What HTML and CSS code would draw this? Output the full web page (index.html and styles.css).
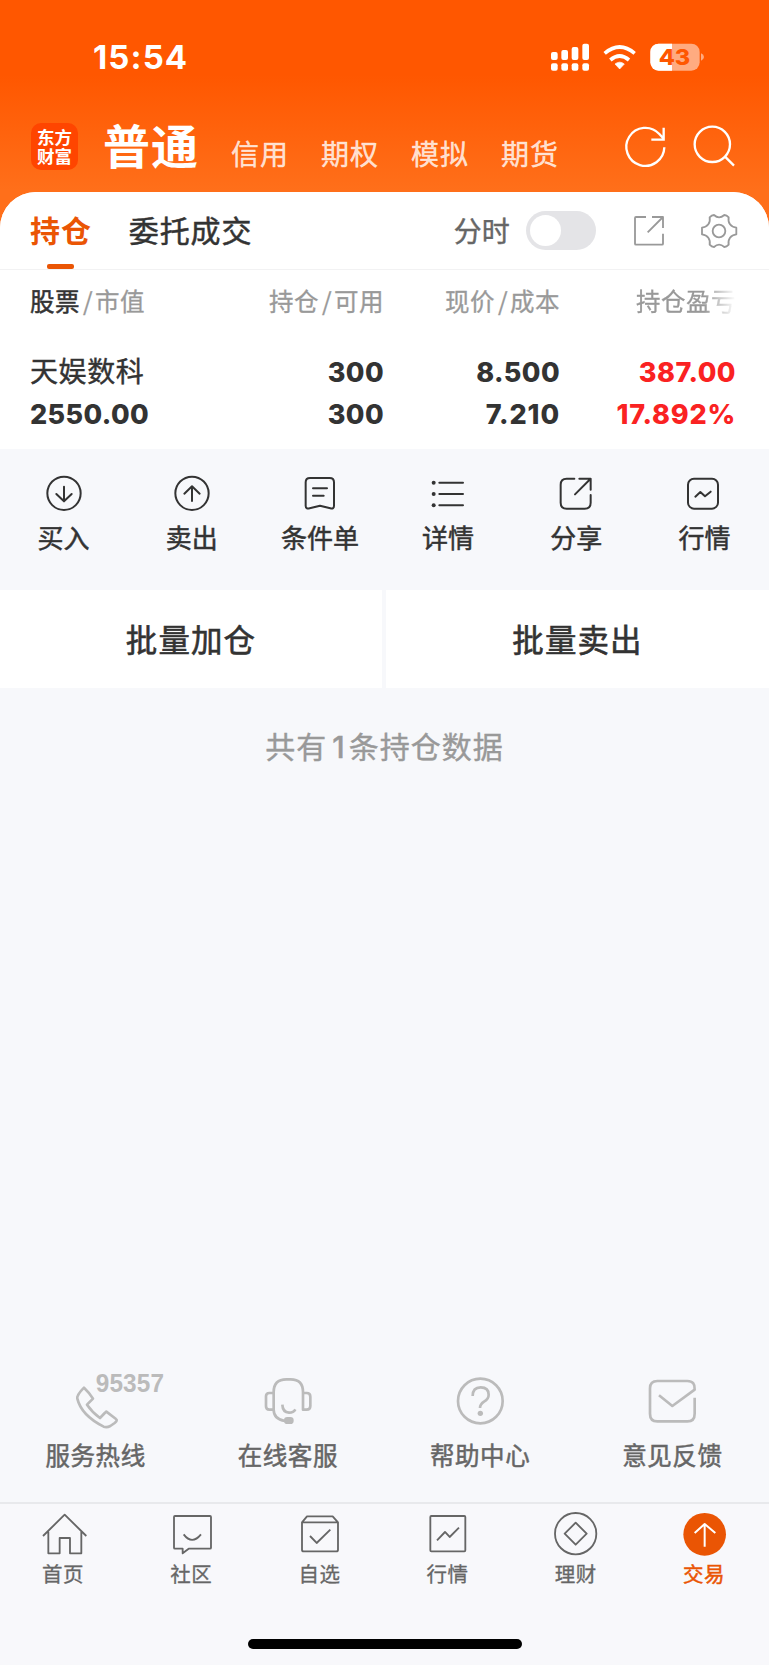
FILE: index.html
```html
<!DOCTYPE html>
<html lang="zh-CN">
<head>
<meta charset="utf-8">
<title>持仓</title>
<link rel="stylesheet" href="styles.css">
</head>
<body>
<div class="app">
  <header class="header">
    <div class="status">
      <span class="clock">15:54</span>
      <svg class="status-icons" viewBox="480 120 490 100">
        <g fill="#fff">
          <rect x="498" y="156" width="20" height="24" rx="6"/><rect x="529" y="150" width="20" height="30" rx="6"/>
          <rect x="560" y="141" width="20" height="39" rx="6"/><rect x="592" y="131" width="20" height="49" rx="6"/>
          <rect x="498" y="190" width="20" height="22" rx="6"/><rect x="529" y="190" width="20" height="22" rx="6"/>
          <rect x="560" y="190" width="20" height="22" rx="6"/><rect x="592" y="190" width="20" height="22" rx="6"/>
          <path d="M690 192q14-11 28 0l-14 15z" stroke="#fff" stroke-width="2" stroke-linejoin="round"/>
        </g>
        <g fill="none" stroke="#fff" stroke-width="11"><path d="M659 160q45-38 90 0"/><path d="M676 180q28-24 56 0"/></g>
        <rect x="796" y="131" width="148" height="81" rx="25" fill="#ffab80"/>
        <path d="M861 131h-40a25 25 0 0 0-25 25v31a25 25 0 0 0 25 25h40z" fill="#fff"/>
        <path d="M948 160q9 4 9 11t-9 11z" fill="#ffab80"/>
        <text class="battery-text" x="821" y="195" textLength="95" lengthAdjust="spacingAndGlyphs">43</text>
      </svg>
    </div>
    <nav class="accounts">
      <div class="logo">东方<br>财富</div>
      <strong class="account-current">普通</strong>
      <div class="account-list"><span>信用</span><span>期权</span><span>模拟</span><span>期货</span></div>
      <svg class="header-icons" viewBox="710 366 350 150" fill="none" stroke="#fff" stroke-width="7">
        <path d="M837 442a57 57 0 1 1-15-40l11 12M835 383v36h-37"/>
        <circle cx="981" cy="433" r="53"/><path d="M1019 470l27 27"/>
      </svg>
    </nav>
  </header>
  <main class="sheet">
    <div class="tabs">
      <span class="tab tab-active">持仓</span>
      <span class="tab">委托成交</span>
      <span class="minute">分时</span>
      <span class="switch"></span>
      <svg class="tool-icons" viewBox="740 636 325 114" fill="none" stroke="#999" stroke-width="5.5" stroke-linejoin="round">
        <path d="M782 651h-30q-3 0-3 3v77q0 3 3 3h78q3 0 3-3v-30M800 651h33v33M833 651l-46 46"/>
        <circle cx="1001" cy="693" r="19"/>
        <path d="M986 645Q1001 659 1017 645Q1024 645 1030 652C1027 668 1036 681 1053 683V703C1036 705 1027 718 1030 734Q1024 741 1017 741Q1001 727 986 741Q979 741 973 734C976 718 967 705 950 703V683C967 681 976 668 973 652Q979 645 986 645Z"/>
      </svg>
    </div>
    <section class="holdings">
      <div class="row row-head">
        <span><b>股票</b><i>/</i>市值</span><span>持仓<i>/</i>可用</span><span>现价<i>/</i>成本</span><span class="fade">持仓盈亏</span>
      </div>
      <div class="row row-name"><span class="name">天娱数科</span><span>300</span><span>8.500</span><span class="gain">387.00</span></div>
      <div class="row row-value"><span>2550.00</span><span>300</span><span class="cost">7.210</span><span class="gain rate">17.892%</span></div>
    </section>
    <nav class="actions">
      <div class="action"><svg viewBox="132 70 120 120"><circle cx="192" cy="131" r="50"/><path d="M192 111v43M169 133l23 22 23-22"/></svg><span>买入</span></div>
      <div class="action"><svg viewBox="516 70 120 120"><circle cx="576" cy="131" r="50"/><path d="M576 154v-43M553 132l23-22 23 22"/></svg><span>卖出</span></div>
      <div class="action"><svg viewBox="900 70 120 120"><path d="M930 85h59q13 0 13 13v70q0 11-11 8l-31-8-31 8q-12 3-12-8V98q0-13 13-13ZM939 116h42M939 138h32"/></svg><span>条件单</span></div>
      <div class="action"><svg viewBox="132 70 120 120"><path d="M163 99h71M163 133h71M163 167h71"/><g class="dots"><circle cx="146" cy="99" r="6"/><circle cx="146" cy="133" r="6"/><circle cx="146" cy="167" r="6"/></g></svg><span>详情</span></div>
      <div class="action"><svg viewBox="517 70 120 120"><path d="M569 87h-23q-18 0-18 18v54q0 18 18 18h54q18 0 18-18v-23M584 87h34v33M617 88l-46 46"/></svg><span>分享</span></div>
      <div class="action"><svg viewBox="902 70 120 120"><rect x="911" y="87" width="90" height="90" rx="18"/><path d="M933 141l15-14 14 13 17-14"/></svg><span>行情</span></div>
    </nav>
    <div class="batch"><button>批量加仓</button><button>批量卖出</button></div>
    <p class="summary">共有<em>1</em>条持仓数据</p>
    <section class="services">
      <div class="service"><svg class="hotline" viewBox="68 60 440 180"><path d="M251 113q-22 22-20 33 12 50 79 84 10 3 20-2l13-9q10-8 4-12l-29-22q-5 4-19 19-24-18-39-40l18-18q-10-17-27-33Z"/><text x="286" y="125" textLength="206" lengthAdjust="spacingAndGlyphs">95357</text></svg><span>服务热线</span></div>
      <div class="service"><svg viewBox="775 60 180 180"><path d="M822 129h-13q-10 0-10 10v30q0 10 10 10h13V126q0-38 38-38h13q37 0 37 38v53h11q11 0 11-11v-28q0-11-11-11h-11M822 179q0 28 34 34M848 164q1 23 20 24 14 0 19-10"/><rect class="solid" x="853" y="201" width="29" height="21" rx="10"/></svg><span>在线客服</span></div>
      <div class="service"><svg viewBox="197 60 180 180"><circle cx="285" cy="153" r="67"/><path d="M262 138q0-26 24-26 24 0 24 22 0 13-14 21-12 8-12 19"/><circle class="solid" cx="285" cy="190" r="8"/></svg><span>帮助中心</span></div>
      <div class="service"><svg viewBox="774 60 180 180"><path d="M822 136l40 32 67-49q2-26-22-26h-90q-22 0-22 22v76q0 23 22 23h90q22 0 22-23v-48"/></svg><span>意见反馈</span></div>
    </section>
  </main>
  <footer class="tabbar">
    <nav class="tabbar-items">
      <div class="item"><svg viewBox="122 480 140 140"><path d="M128 558l65-64 65 64M144 545v65h34v-46h31v46h34v-65"/></svg><span>首页</span></div>
      <div class="item"><svg viewBox="507 480 140 140"><path d="M525 498h105q3 0 3 3v92q0 3-3 3h-64l-18 14v-14h-23q-3 0-3-3v-92q0-3 3-3ZM551 553q25 33 52 0"/></svg><span>社区</span></div>
      <div class="item"><svg viewBox="891 480 140 140"><path d="M906 517l15-18h77l16 18v82q0 5-5 5h-98q-5 0-5-5ZM906 517h108M930 558l20 21 41-40"/></svg><span>自选</span></div>
      <div class="item"><svg viewBox="121 480 140 140"><rect x="137" y="498" width="105" height="106" rx="3"/><path d="M157 571l24-25 14 15 28-28"/></svg><span>行情</span></div>
      <div class="item"><svg viewBox="505 480 140 140"><circle cx="573" cy="551" r="62"/><path d="M573 518l33 33-33 33-33-33z"/></svg><span>理财</span></div>
      <div class="item item-active"><svg viewBox="890 480 140 140"><circle class="disc" cx="958" cy="553" r="64"/><path class="arrow" d="M958 590v-68M928 549l30-27 32 27"/></svg><span>交易</span></div>
    </nav>
    <div class="home-bar"></div>
  </footer>
</div>
</body>
</html>
```
FILE: styles.css
```css
* { box-sizing: border-box; }
body { margin: 0; font-family: "Noto Sans CJK SC", sans-serif; color: #333; background: #f7f8fb; }
svg { display: block; flex: none; overflow: visible; }
.app { width: 769px; height: 1665px; display: flex; flex-direction: column; overflow: hidden; background: #f7f8fb; }

.header { height: 240px; flex: none; background: linear-gradient(#ff5700 75px, #ff6f1a 190px); color: #fff; }
.status { height: 114px; padding: 0 61px 0 93px; display: flex; justify-content: space-between; align-items: center; }
.clock { font: 700 33px/40px Inter, sans-serif; letter-spacing: 1.1px; }
.status-icons { width: 163.33px; height: 33.33px; }
.battery-text { font: 800 66px Inter, sans-serif; fill: #ff5700; }
.accounts { height: 64px; padding: 0 30px 0 31px; display: flex; align-items: center; }
.logo { width: 47px; height: 47px; padding-top: 4px; border-radius: 10px; background: #ff4500; text-align: center; font-size: 17.5px; line-height: 19px; font-weight: 700; }
.account-current { margin: -5px 0 0 25px; font-size: 47px; line-height: 60px; letter-spacing: 1px; font-weight: 700; }
.account-list { display: flex; gap: 32px; margin: 13px 0 0 32px; font-size: 28px; letter-spacing: 1px; line-height: 40px; color: rgba(255,255,255,.8); -webkit-text-stroke: .5px rgba(255,255,255,.6); }
.header-icons { width: 116.67px; height: 50px; margin: 1px 0 0 auto; }

.sheet { margin-top: -48px; flex: 1; display: flex; flex-direction: column; background: #f7f8fb; border-radius: 36px 36px 0 0; overflow: hidden; }
.tabs { height: 78px; flex: none; padding: 0 29px 0 30px; display: flex; align-items: center; background: #fff; border-bottom: 1px solid #f2f2f3; }
.tab { height: 77px; margin-right: 37px; display: flex; flex-direction: column; align-items: center; font-size: 30px; line-height: 75px; letter-spacing: .9px; -webkit-text-stroke: .5px #333; }
.tab-active { color: #ea5504; font-weight: 700; -webkit-text-stroke: 0; }
.tab-active::after { content: ""; width: 27px; height: 5px; margin: -3px 1px 0 0; flex: none; border-radius: 2px; background: #ea5504; }
.minute { margin: -1px 0 0 auto; font-size: 28px; color: #666; -webkit-text-stroke: .4px #666; }
.switch { width: 70px; height: 39px; margin: 0 36px 0 16px; padding: 4px; border-radius: 20px; background: #e4e4e7; }
.switch::before { content: ""; display: block; width: 31px; height: 31px; border-radius: 50%; background: #fff; }
.tool-icons { width: 108.33px; height: 38px; }

.holdings { height: 179px; flex: none; background: #fff; padding: 12px 33px 0 30px; }
.row { display: grid; grid-template-columns: 178px 176px 176px 176px; text-align: right; font: 800 27px/42px Inter, "Noto Sans CJK SC", sans-serif; letter-spacing: .4px; }
.row > span:first-child { text-align: left; }
.row-head { height: 70px; font: 400 24.5px/38px "Noto Sans CJK SC", sans-serif; letter-spacing: .5px; color: #999; -webkit-text-stroke: .3px; }
.row-head b { font-weight: 400; color: #333; -webkit-text-stroke: .5px; }
.row-head i { font-style: normal; display: inline-block; padding: 0 2px 0 3px; }
.fade { -webkit-mask-image: linear-gradient(90deg, #000 calc(100% - 32px), transparent); mask-image: linear-gradient(90deg, #000 calc(100% - 32px), transparent); }
.row .name { font-family: "Noto Sans CJK SC", sans-serif; font-weight: 400; font-size: 28px; line-height: 37px; letter-spacing: .6px; -webkit-text-stroke: .4px; }
.gain { color: #fa2222; letter-spacing: .5px; }
.cost { letter-spacing: .9px; }
.rate { letter-spacing: .8px; }

.actions { height: 141px; flex: none; padding-top: 24px; display: grid; grid-template-columns: repeat(6, 1fr); }
.action { display: flex; flex-direction: column; align-items: center; font-size: 26px; line-height: 38px; gap: 5px; -webkit-text-stroke: .5px; }
.action span { margin-right: 1px; }
.action svg { width: 40px; height: 40px; fill: none; stroke: #333; stroke-width: 6; stroke-linecap: round; stroke-linejoin: round; }
.action .dots { fill: #333; stroke: none; }

.batch { height: 98px; flex: none; display: grid; grid-template-columns: 382px 383px; gap: 4px; }
.batch button { border: 0; padding: 0 0 2px 0; background: #fff; color: #333; font: 400 31.5px/40px "Noto Sans CJK SC", sans-serif; letter-spacing: 1.1px; -webkit-text-stroke: .6px; }
.summary { margin: 35px 0 0; text-align: center; font-size: 30px; line-height: 44px; letter-spacing: 1px; color: #999; -webkit-text-stroke: .4px; }
.summary em { font: 500 30px Inter, sans-serif; margin: 0 3px 0 5px; }

.services { margin-top: auto; height: 132px; flex: none; display: grid; grid-template-columns: repeat(4, 1fr); }
.service { display: flex; flex-direction: column; align-items: center; gap: 7px; font-size: 24.5px; line-height: 36px; letter-spacing: .6px; color: #666; -webkit-text-stroke: .5px; }
.service span { margin-right: 1px; }
.service svg { width: 60px; height: 60px; fill: none; stroke: #bbb; stroke-width: 8; stroke-linejoin: round; }
.service .hotline { width: 146.67px; }
.service .solid { fill: #bbb; stroke: none; }
.service text { font: 700 75px "Liberation Sans", sans-serif; fill: #bbb; stroke: none; -webkit-text-stroke: 0; }

.tabbar { height: 163px; flex: none; border-top: 2px solid #e8e9ec; background: #f8f8fb; }
.tabbar-items { padding-top: 6px; height: 135px; display: grid; grid-template-columns: repeat(6, 1fr); }
.item { display: flex; flex-direction: column; align-items: center; gap: 1px; font-size: 20.5px; line-height: 31px; letter-spacing: .5px; color: #666; -webkit-text-stroke: .3px; }
.item span { margin-right: 2px; }
.item svg { width: 46.67px; height: 46.67px; fill: none; stroke: #666; stroke-width: 5.5; stroke-linejoin: round; }
.item-active { color: #ea5504; -webkit-text-stroke: .5px; }
.item .disc { fill: #ea5504; stroke: none; }
.item .arrow { stroke: #fff; stroke-width: 6; }
.home-bar { width: 274px; height: 10px; margin: 0 auto; border-radius: 5px; background: #000; }
```
